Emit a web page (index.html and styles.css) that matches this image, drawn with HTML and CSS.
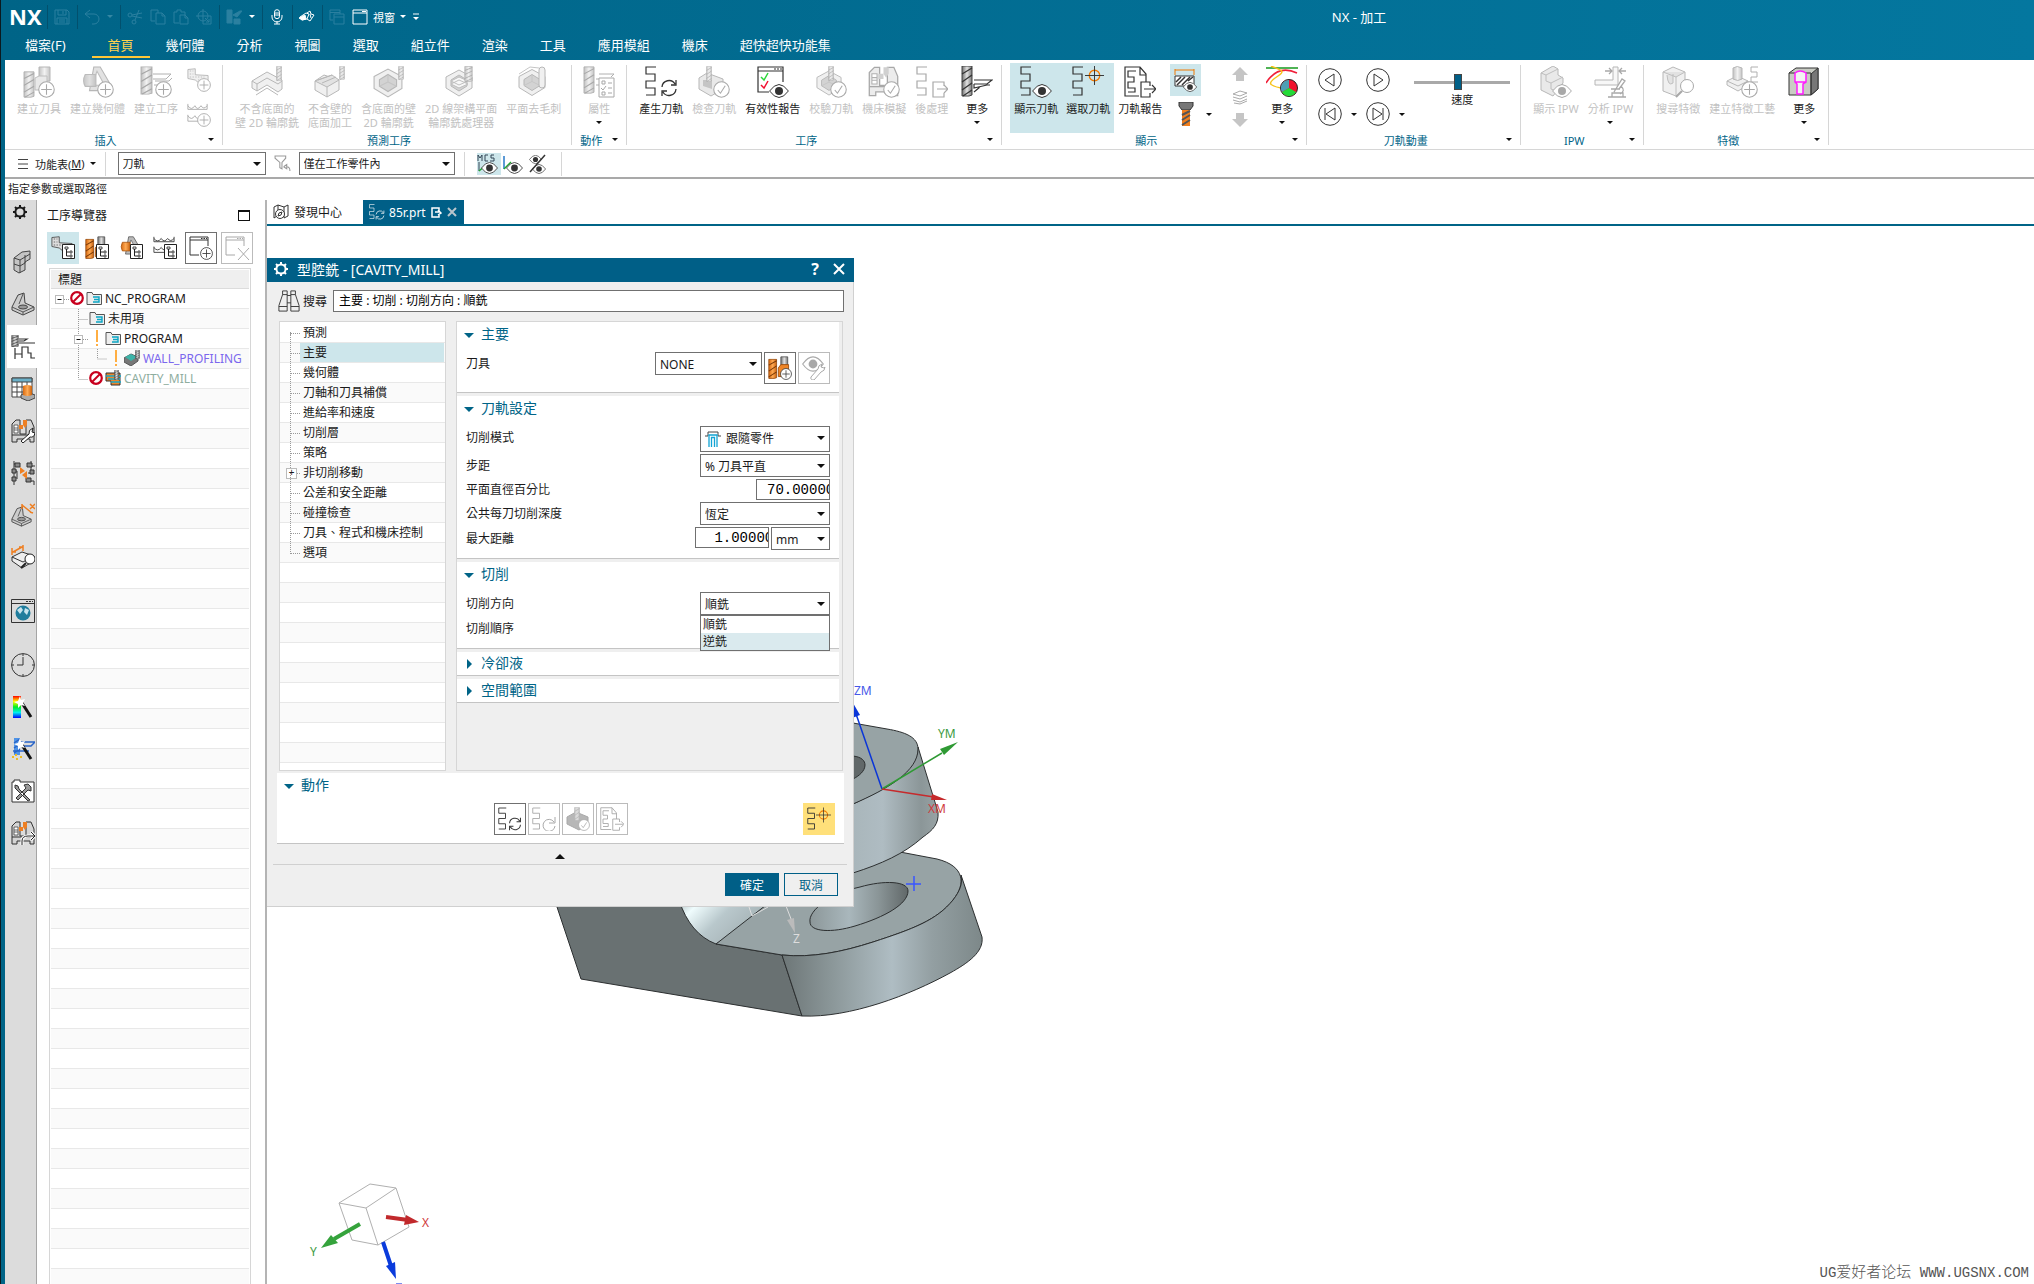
FILE: index.html
```
<!DOCTYPE html>
<html lang="zh-Hant">
<head>
  <meta charset="UTF-8">
  <meta name="viewport" content="width=device-width, initial-scale=1.0">
  <title>NX - 加工</title>
  <link rel="stylesheet" href="styles.css">
</head>
<body>
  <!-- shared icon parts -->
  <svg class="defs" width="0" height="0" aria-hidden="true">
    <defs>
      <linearGradient id="gMetal" x1="0" x2="1"><stop offset="0" stop-color="#6f6f6f"/><stop offset=".5" stop-color="#e2e2e2"/><stop offset="1" stop-color="#777"/></linearGradient>
      <linearGradient id="gOrange" x1="0" x2="1"><stop offset="0" stop-color="#d96a10"/><stop offset=".5" stop-color="#ffab55"/><stop offset="1" stop-color="#c8600c"/></linearGradient>
      <linearGradient id="gRainbow" x1="0" x2="0" y1="0" y2="1"><stop offset="0" stop-color="#f00"/><stop offset=".25" stop-color="#ff0"/><stop offset=".5" stop-color="#0e2"/><stop offset=".75" stop-color="#0ee"/><stop offset="1" stop-color="#00f"/></linearGradient>
      <symbol id="zig" viewBox="0 0 12 30"><path d="M11 1H1v7h9v7H1v7h9v7H1" fill="none" stroke="currentColor" stroke-width="1.2"/></symbol>
      <symbol id="plus" viewBox="0 0 16 16"><circle cx="8" cy="8" r="7.3" fill="#fff" stroke="#333"/><path d="M8 3v10M3 8h10" stroke="#333"/></symbol>
      <symbol id="check" viewBox="0 0 16 16"><circle cx="8" cy="8" r="7.3" fill="#fff" stroke="#333"/><path d="M4.500 8.500l2.500 3 4.500-7" fill="none" stroke="#333"/></symbol>
      <symbol id="eye" viewBox="0 0 20 14"><path d="M.6 7Q10-6 19.400 7Q10 20 .6 7z" fill="#fff" stroke="#333"/><circle cx="10" cy="7" r="4" fill="#333"/></symbol>
      <symbol id="tool" viewBox="0 0 12 32" preserveAspectRatio="none"><path d="M1 1h10v29l-3 1H1z" fill="url(#gMetal)" stroke="#444"/><path d="M1 9l10-6M1 17l10-7M1 25l10-7M2 31l9-6" stroke="#333" stroke-width="1.300"/></symbol>
      <symbol id="otool" viewBox="0 0 12 28" preserveAspectRatio="none"><path d="M1 1h10v25l-3 1H1z" fill="url(#gOrange)" stroke="#8c4208"/><path d="M1 9l10-6M1 17l10-7M1 25l10-7" stroke="#7a3a08" stroke-width="1.300"/></symbol>
      <symbol id="refresh" viewBox="0 0 18 18"><path d="M2 8a7 7 0 0 1 13-3M16 1v5h-5M16 10a7 7 0 0 1-13 3M2 17v-5h5" fill="none" stroke="currentColor" stroke-width="1.300"/></symbol>
      <symbol id="hexpart" viewBox="0 0 28 28"><path d="M1 8L14 1l13 7v11L14 27 1 19z" fill="#ddd" stroke="#555"/><path d="M6 11l8-5 8 5v6l-8 5-8-5z" fill="#999" stroke="#555"/><path d="M6 17l8-4 8 4M14 6v7" fill="none" stroke="#777"/></symbol>
      <symbol id="treebadge" viewBox="0 0 14 16"><path d="M.5.5h12v14H.5z" fill="#fff" stroke="#222"/><path d="M4.500 4v8M4.500 8h3M4.500 12h3" stroke="#222" fill="none"/><path d="M3 3h3v2H3zM8 7h2v2H8zM8 11h2v2H8z" fill="#fff" stroke="#222" stroke-width=".8"/></symbol>
      <symbol id="wave" viewBox="0 0 24 22" preserveAspectRatio="none"><path d="M1 1v6h22V1M1 3q4 6 8 0 3 6 7 0 3 5 7 0M1 13v7h22v-7M1 14q4 6 8 0 3 6 7 0 3 5 7 0" fill="none" stroke="#333"/></symbol>
      <symbol id="flag" viewBox="0 0 24 24" preserveAspectRatio="none"><path d="M1 2l8-1v8l14 1v11h-9l-5-5-8-2z" fill="#ddd" stroke="#444"/><path d="M3 4h4M3 8h4M3 12h16M12 16h9" stroke="#555" stroke-dasharray="1.500 1.500"/></symbol>
      <symbol id="machine" viewBox="0 0 24 24"><path d="M1 20V5l4-4h4v14h6V1h5l3 7v15h-4v-3H6v3H1z" fill="#d4d4d4" stroke="#333"/><path d="M3 6h4v8H3zM3 9h4M3 11h4" fill="#fff" stroke="#444" stroke-width=".8"/><path d="M12 1h4v5l-2 3-2-3zM8 6h4v4H8z" fill="#ee7f22"/><path d="M1 16h22" stroke="#333"/></symbol>
      <symbol id="target" viewBox="0 0 20 20"><circle cx="10" cy="10" r="5.500" fill="none" stroke="#f07800" stroke-width="1.400"/><path d="M10 0v20M0 10h20" stroke="#333"/></symbol>
      <symbol id="report" viewBox="0 0 32 32"><path d="M15 30H1V1h15l6 7v8M16 1v8h6M12 5H4v6h6v5H4v6h7v4H4" fill="none" stroke="currentColor" stroke-width="1.200"/><path d="M26 20v-4h-9v15h9v-4M20 23h11M28 19l4 4-4 4" fill="none" stroke="currentColor" stroke-width="1.200"/></symbol>
      <symbol id="folder" viewBox="0 0 16 16"><path d="M1 14.500V2.500h5l1 2h8.500v10z" fill="#eee" stroke="#555"/><path d="M7 7h6v5H7M8 9.500h5" fill="none" stroke="#0aa5c4" stroke-width="1.400"/></symbol>
      <symbol id="ban" viewBox="0 0 14 14"><circle cx="7" cy="7" r="5.800" fill="#fff" stroke="#c8001e" stroke-width="2.200"/><path d="M3 11l8-8" stroke="#c8001e" stroke-width="2"/></symbol>
      <symbol id="gear" viewBox="0 0 16 16"><circle cx="8" cy="8" r="4.600" fill="none" stroke="currentColor" stroke-width="2"/><path d="M8 1v2M8 13v2M1 8h2M13 8h2M3 3l1.500 1.500M11.500 11.500L13 13M13 3l-1.500 1.500M3 13l1.500-1.500" stroke="currentColor" stroke-width="2"/></symbol>
      <symbol id="bracket" viewBox="0 0 24 24"><path d="M1 15L7 3l6-2 1 10 9 4v3l-11 5L1 18z" fill="#ccc" stroke="#444"/><path d="M1 15l11 5 11-5M12 20v3M8 12L12 2" fill="none" stroke="#555"/><ellipse cx="12" cy="15" rx="4.500" ry="2" fill="#999" stroke="#444"/></symbol>
      <symbol id="hopper" viewBox="0 0 28 28"><path d="M11 1h6l10 17v5H7z" fill="#bbb" stroke="#555"/><path d="M14 5l7 13H9z" fill="#fff" stroke="#666"/><path d="M3 8h10v11H3q-3-5 0-11z" fill="url(#gOrange)" stroke="#a65410"/></symbol>
      <symbol id="holder" viewBox="0 0 28 28"><use href="#otool" x="0" y="3" width="11" height="24"/><path d="M15 1h8v12h-8z" fill="url(#gMetal)" stroke="#555"/><path d="M12 14l3-4h9v14H12z" fill="#ee8528" stroke="#9a4c0c"/></symbol>
      <symbol id="wand" viewBox="0 0 24 24"><path d="M11 8l9 14" stroke="#111" stroke-width="3"/><path d="M9 1l1 4 4-1-2 4 2 3-4-1-3 3V9L3 7l4-1z" fill="#fff"/></symbol>
    </defs>
  </svg>

  <div class="app">
    <header class="titlebar">
      <div class="quick">
        <strong class="logo">NX</strong>
        <i class="vline"></i>
        <button class="q dim" aria-label="儲存"><svg viewBox="0 0 16 16"><path d="M1 1h12l2 2v12H1zM4 1v5h8V1M9 2v3M3 15V9h10v6M5 11h6M5 13h6"/></svg></button>
        <i class="vline"></i>
        <button class="q dim" aria-label="復原"><svg viewBox="0 0 16 16"><path d="M6 1L1 5l5 4M1 5h9a5 5 0 0 1 0 10H8"/></svg></button>
        <b class="caret dim"></b>
        <i class="vline"></i>
        <button class="q dim" aria-label="剪下"><svg viewBox="0 0 16 16"><circle cx="3" cy="6" r="2"/><circle cx="7" cy="13" r="2"/><path d="M5 7l10 2M8 11l4-10M5 6l10-2"/></svg></button>
        <button class="q dim" aria-label="複製"><svg viewBox="0 0 16 16"><path d="M5 12H1V1h7v3M6 4h6l3 3v8H6zM12 4v3h3"/></svg></button>
        <button class="q dim" aria-label="貼上"><svg viewBox="0 0 16 16"><path d="M6 14H1V3h3V1h4v2h4v3M7 6h5l3 3v6H7zM12 6v3h3"/></svg></button>
        <button class="q dim" aria-label="重複"><svg viewBox="0 0 16 16"><circle cx="7" cy="7" r="5"/><path d="M7 0v7M0 7h7M7 7h8v8H7zM9 9l4 4M13 10v3h-3"/></svg></button>
        <i class="vline"></i>
        <button class="q dim" aria-label="顯示"><svg viewBox="0 0 16 16"><path fill="currentColor" d="M1 1h5v13H1zM7 6l7-4h2l-5 6zM8 10h6v5H8z"/></svg></button>
        <b class="caret"></b>
        <i class="vline"></i>
        <button class="q" aria-label="語音"><svg viewBox="0 0 16 16"><rect x="5.500" y=".7" width="5" height="9" rx="2.500"/><path d="M3 6v2a5 5 0 0 0 10 0V6M8 12v3M5 15h6M6 4h4M6 6h4"/></svg></button>
        <i class="vline"></i>
        <button class="q" aria-label="觸控"><svg viewBox="0 0 16 16"><path d="M1 8l6-4 3 1-2 5-5 1zM8 4l3-2 1 3 3 1-4 6-3-2M11 5l1 4"/><path d="M0 9l6-3 1 4-4 1z" fill="currentColor"/></svg></button>
        <i class="vline"></i>
        <button class="q dim" aria-label="切換視窗"><svg viewBox="0 0 16 16"><path d="M4 11H1V1h10v4M1 3.500h10M5 5h10v10H5zM5 8h10"/></svg></button>
        <button class="window-menu"><svg viewBox="0 0 16 16"><path d="M1 1h14v14H1zM1 4h14M10 2.500h4"/></svg>視窗<b class="caret"></b></button>
        <button class="q more-cmd" aria-label="自訂"><svg viewBox="0 0 16 16"><path d="M5 5h6"/><path d="M5 8h6l-3 3z" fill="currentColor" stroke="none"/></svg></button>
      </div>
      <div class="caption">NX - 加工</div>
    </header>

    <nav class="tabs">
      <a class="file" href="#">檔案(F)</a>
      <a class="on" href="#">首頁</a>
      <a href="#">幾何體</a>
      <a href="#">分析</a>
      <a href="#">視圖</a>
      <a href="#">選取</a>
      <a href="#">組立件</a>
      <a href="#">渲染</a>
      <a href="#">工具</a>
      <a href="#">應用模組</a>
      <a href="#">機床</a>
      <a href="#">超快超快功能集</a>
    </nav>

    <div class="frame">
      <!-- ribbon -->
      <div class="ribbon">
        <section class="group g-insert">
          <div class="cmds">
            <button class="cmd" disabled><svg viewBox="0 0 32 32"><use href="#tool" x="0" y="5" width="12" height="27"/><path d="M16 1h11v14H16z" fill="url(#gMetal)" stroke="#555"/><path d="M12 12l4-2h8v14H12z" fill="#ccc" stroke="#666"/><use href="#plus" x="15" y="15" width="17" height="17"/></svg>建立刀具</button>
            <button class="cmd" disabled><svg viewBox="0 0 32 32"><use href="#hopper" x="0" y="0" width="30" height="30"/><use href="#plus" x="15" y="15" width="17" height="17"/></svg>建立幾何體</button>
            <button class="cmd" disabled><svg viewBox="0 0 32 32"><use href="#tool" x="0" y="0" width="13" height="29"/><path d="M13 8h18l-5 5H13M14 19h15M15 15h14l3-3" fill="none" stroke="#444"/><use href="#plus" x="15" y="15" width="17" height="17"/></svg>建立工序</button>
            <div class="stack">
              <button class="mini" disabled aria-label="建立程式"><svg viewBox="0 0 24 24"><use href="#flag" width="22" height="18"/><use href="#plus" x="10" y="10" width="14" height="14"/></svg></button>
              <button class="mini" disabled aria-label="建立方法"><svg viewBox="0 0 24 24"><use href="#wave" width="21" height="20"/><use href="#plus" x="10" y="10" width="14" height="14"/></svg></button>
            </div>
          </div>
          <div class="foot"><span>插入</span><b class="caret"></b></div>
        </section>
        <i class="bar"></i>
        <section class="group g-predict">
          <div class="cmds">
            <button class="cmd" disabled><svg viewBox="0 0 32 32"><path d="M1 15l15-9 15 8v9l-4 3-11-7-10 6-5-3z" fill="#ddd" stroke="#555"/><path d="M1 15l5 3 10-6 11 6 4-3M6 18v7M5 29l11-7 11 7" fill="none" stroke="#555"/><use href="#tool" x="25" y="0" width="6" height="15"/></svg>不含底面的<br>壁 2D 輪廓銑</button>
            <button class="cmd" disabled><svg viewBox="0 0 32 32"><path d="M1 15l9-6 15 5v10l-12 7-12-7z" fill="#ddd" stroke="#555"/><path d="M1 15l17-6 7 5-12 7zM4 14l14-5M8 17l14-6M13 21v10" fill="#bbb" stroke="#555"/><use href="#tool" x="25" y="0" width="6" height="14"/></svg>不含壁的<br>底面加工</button>
            <button class="cmd" disabled><svg viewBox="0 0 32 32"><use href="#hexpart" x="0" y="2" width="30" height="30"/><use href="#tool" x="25" y="0" width="6" height="14"/></svg>含底面的壁<br>2D 輪廓銑</button>
            <button class="cmd" disabled><svg viewBox="0 0 32 32"><use href="#hexpart" x="0" y="3" width="28" height="28"/><path d="M6 15l8-4 9 4-9 4zM6 18l8-4 9 4-9 4z" fill="#eee" stroke="#666"/><use href="#tool" x="19" y="0" width="9" height="16"/></svg>2D 線架構平面<br>輪廓銑處理器</button>
            <button class="cmd" disabled><svg viewBox="0 0 32 32"><use href="#hexpart" x="0" y="2" width="28" height="29"/><path d="M1 8L12 1l9 1" fill="none" stroke="#777"/><rect x="21" y="1" width="6" height="21" rx="3" fill="#ddd" stroke="#555"/></svg>平面去毛刺</button>
          </div>
          <div class="foot"><span>預測工序</span><b class="caret none"></b></div>
        </section>
        <i class="bar"></i>
        <section class="group g-action">
          <div class="cmds">
            <button class="cmd" disabled><svg viewBox="0 0 32 32"><use href="#tool" x="0" y="0" width="12" height="28"/><path d="M16 8h15l-3 3M13 13h3M13 19h3" stroke="#444" fill="none"/><path d="M16 12h15v19H16z" fill="#fff" stroke="#333"/><path d="M19 15h3v3h-3zM19 26h3v3h-3zM18 22l2 2 3-4M25 17h4M25 22h4M25 27h4" fill="none" stroke="#333"/></svg>屬性<b class="caret"></b></button>
          </div>
          <div class="foot"><span>動作</span><b class="caret"></b></div>
        </section>
        <i class="bar"></i>
        <section class="group g-oper">
          <div class="cmds">
            <button class="cmd"><svg viewBox="0 0 32 32"><use href="#zig" width="12" height="30"/><use href="#refresh" x="15" y="13" width="18" height="18"/></svg>產生刀軌</button>
            <button class="cmd" disabled><svg viewBox="0 0 32 32"><path d="M1 12l8-5 16 6v10l-12 7-12-7z" fill="#ccc" stroke="#555"/><path d="M5 14h9v9l-9-3z" fill="#777"/><use href="#tool" x="8" y="0" width="6" height="16"/><use href="#check" x="15" y="15" width="17" height="17"/></svg>檢查刀軌</button>
            <button class="cmd"><svg viewBox="0 0 32 32"><path d="M12 26H1V1h25v15M1 5h25" fill="none" stroke="#333" stroke-width="1.200"/><path d="M17 3h2M20 3h2M23 3h2" stroke="#333" stroke-width="1.200"/><path d="M4 11l3 3 4-7" fill="none" stroke="#2bd53a" stroke-width="1.500"/><path d="M4 19l3 3 4-7" fill="none" stroke="#f0102e" stroke-width="1.500"/><use href="#eye" x="12" y="18" width="20" height="14"/></svg>有效性報告</button>
            <button class="cmd" disabled><svg viewBox="0 0 32 32"><use href="#hexpart" x="0" y="4" width="28" height="26"/><use href="#tool" x="13" y="0" width="6" height="15"/><use href="#check" x="15" y="15" width="17" height="17"/></svg>校驗刀軌</button>
            <button class="cmd" disabled><svg viewBox="0 0 32 32"><use href="#machine" width="31" height="31"/><use href="#check" x="15" y="15" width="17" height="17"/></svg>機床模擬</button>
            <button class="cmd" disabled><svg viewBox="0 0 32 32"><use href="#zig" width="12" height="30"/><path d="M28 20v-4H17v15h11v-4M21 23h11M28 19l4 4-4 4" fill="none" stroke="#333" stroke-width="1.200"/></svg>後處理</button>
            <button class="cmd more"><svg viewBox="0 0 32 32"><use href="#tool" x="0" y="-1" width="12" height="32"/><path d="M13 14h18l-5 4H13M13 18v4l13-3h3M13 26l6-5" fill="none" stroke="#333" stroke-width="1.200"/></svg>更多<b class="caret"></b></button>
          </div>
          <div class="foot"><span>工序</span><b class="caret"></b></div>
        </section>
        <i class="bar"></i>
        <section class="group g-show">
          <div class="cmds">
            <button class="cmd lit"><svg viewBox="0 0 32 32"><use href="#zig" width="12" height="30"/><use href="#eye" x="12" y="18" width="20" height="14"/></svg>顯示刀軌</button>
            <button class="cmd lit"><svg viewBox="0 0 32 32"><use href="#zig" width="12" height="30"/><use href="#target" x="13" y="0" width="19" height="19"/></svg>選取刀軌</button>
            <button class="cmd"><svg viewBox="0 0 32 32"><use href="#report" width="32" height="32"/></svg>刀軌報告</button>
            <div class="stack ipw">
              <button class="mini lit" aria-label="毛坯顯示"><svg viewBox="0 0 24 24"><path d="M1 1v6M20 1v6M1 2h19" stroke="#f07800" fill="none"/><path d="M1 8h19v10H1z" fill="#fff" stroke="#333"/><path d="M2 14l5-5M3 17l8-8M8 17l8-8M14 13l5-4" stroke="#333" stroke-width="1.500"/><use href="#eye" x="8" y="14" width="16" height="10"/></svg></button>
              <button class="mini bolt" aria-label="刀具顯示"><svg viewBox="0 0 24 24"><path d="M5 0h14v4l-3 4H8L5 4z" fill="#777" stroke="#333"/><path d="M8 8h8v16H8z" fill="#f07e1c"/><path d="M8 13l8-4M8 18l8-5M8 23l8-5" stroke="#555" stroke-width="2"/></svg><b class="caret"></b></button>
            </div>
            <div class="stack arrows">
              <button class="tiny" disabled aria-label="上移"><svg viewBox="0 0 16 16"><path d="M8 1l8 8h-4v6H4V9H0z" fill="#777"/></svg></button>
              <button class="tiny" disabled aria-label="層"><svg viewBox="0 0 16 16"><path d="M1 5l7-3 7 2-7 3zM1 8l7 2 7-3M1 11l7 2 7-3M2 14l6 1 7-3" fill="none" stroke="#333"/></svg></button>
              <button class="tiny" disabled aria-label="下移"><svg viewBox="0 0 16 16"><path d="M8 15l8-8h-4V1H4v6H0z" fill="#777"/></svg></button>
            </div>
            <button class="cmd more"><svg viewBox="0 0 32 32"><path d="M0 2h32" stroke="#159a1d" stroke-width="1.500"/><path d="M0 17Q12-2 31 7" fill="none" stroke="#f0203a" stroke-width="1.500"/><path d="M5 0c8 4 16 4 7 10s-12 9 3 12" fill="none" stroke="#f7c31a" stroke-width="1.500"/><circle cx="23" cy="22" r="8.500" fill="#f0122e" stroke="#222"/><path d="M23 22V14a8 8 0 0 0-7 12z" fill="#4c9fb5"/><path d="M23 22l-7 4a8 8 0 0 0 14 0z" fill="#22da38"/></svg>更多<b class="caret"></b></button>
          </div>
          <div class="foot"><span>顯示</span><b class="caret"></b></div>
        </section>
        <i class="bar"></i>
        <section class="group g-anim">
          <div class="cmds">
            <div class="player">
              <button class="pl" aria-label="倒轉"><svg viewBox="0 0 24 24"><circle cx="12" cy="12" r="11.300"/><path d="M16 6v12l-9-6z"/></svg></button><span></span>
              <button class="pl" aria-label="播放"><svg viewBox="0 0 24 24"><circle cx="12" cy="12" r="11.300"/><path d="M8 6v12l9-6z"/></svg></button><span></span>
              <button class="pl" aria-label="上一步"><svg viewBox="0 0 24 24"><circle cx="12" cy="12" r="11.300"/><path d="M17 6v12l-9-6zM7 6v12"/></svg></button><b class="caret"></b>
              <button class="pl" aria-label="下一步"><svg viewBox="0 0 24 24"><circle cx="12" cy="12" r="11.300"/><path d="M7 6v12l9-6zM17 6v12"/></svg></button><b class="caret"></b>
            </div>
            <div class="speed">
              <input type="range" id="speed" min="0" max="100" value="45">
              <label for="speed">速度</label>
            </div>
          </div>
          <div class="foot"><span>刀軌動畫</span><b class="caret"></b></div>
        </section>
        <i class="bar"></i>
        <section class="group g-ipw">
          <div class="cmds">
            <button class="cmd" disabled><svg viewBox="0 0 32 32"><path d="M1 7l12-7 5 3v6l5 3v5l-10 13-12-6z" fill="#ccc" stroke="#555"/><path d="M1 7l5 2 12-6M6 9v6l5 2 12-6M11 17v6l5 2" fill="none" stroke="#666"/><use href="#eye" x="12" y="18" width="20" height="14"/></svg>顯示 IPW</button>
            <button class="cmd" disabled><svg viewBox="0 0 32 32"><path d="M19 1h5v18H1v-5h18z" fill="#eee" stroke="#555"/><path d="M11 5h7M15 2l3 3-3 3M32 5h-7M28 2l-3 3 3 3M14 31h18M18 27h11v4H18zM20 26l8-13 3 2-6 8M17 23h9M27 20q5 5-1 8" fill="none" stroke="#333" stroke-width="1.300"/></svg>分析 IPW<b class="caret"></b></button>
          </div>
          <div class="foot"><span>IPW</span><b class="caret"></b></div>
        </section>
        <i class="bar"></i>
        <section class="group g-feat">
          <div class="cmds">
            <button class="cmd" disabled><svg viewBox="0 0 32 32"><path d="M1 6l10-5 12 5v17l-9 7-13-5z" fill="#ddd" stroke="#555"/><path d="M1 6l13 5 9-5M14 11v19M5 9q1 12 6 8V8" fill="#bbb" stroke="#666"/><circle cx="25" cy="20" r="6.500" fill="#fff" stroke="#333"/><path d="M20 25l-6 6" stroke="#333" stroke-width="2"/></svg>搜尋特徵</button>
            <button class="cmd" disabled><svg viewBox="0 0 32 32"><path d="M1 15l10-5 11 5v4l-10 6-11-6z" fill="#ddd" stroke="#555"/><path d="M1 15l11 5 10-5" fill="none" stroke="#555"/><path d="M7 2q4-3 9 0v11q-4 3-9 0z" fill="url(#gMetal)" stroke="#555"/><path d="M32 1h-7v5h6v5h-6v5h7" fill="none" stroke="#444"/><use href="#plus" x="15" y="15" width="17" height="17"/></svg>建立特徵工藝</button>
            <button class="cmd more"><svg viewBox="0 0 32 32"><path d="M1 7l7-5h22v21l-7 6H1z" fill="#c9ccc4" stroke="#333"/><path d="M23 8l7-6v21l-7 6z" fill="#777" stroke="#333"/><path d="M1 7h22v22" fill="none" stroke="#333"/><path d="M7 7q5-4 11 0v9l-3 2v10H9V18l-2-2zM7 16h11" fill="#f3f3f3" stroke="#ff1cff" stroke-width="1.500"/></svg>更多<b class="caret"></b></button>
          </div>
          <div class="foot"><span>特徵</span><b class="caret"></b></div>
        </section>
        <i class="bar"></i>
      </div>

      <!-- selection bar -->
      <div class="selbar">
        <button class="menu-btn"><svg viewBox="0 0 12 12"><path d="M1 1.500h10M1 6h10M1 10.500h10" stroke="#444"/></svg>功能表(<u>M</u>)<b class="caret"></b></button>
        <i class="bar"></i>
        <span class="combo type"><select aria-label="類型"><option>刀軌</option></select></span>
        <svg class="funnel" viewBox="0 0 16 16"><path d="M1 1h10v2L7.500 7v6l-2-1V7L1 3zM9 11l3-2v2q3 0 3 4M9 11l3 2v-2" fill="none" stroke="#999"/></svg>
        <span class="combo scope"><select aria-label="範圍"><option>僅在工作零件內</option></select></span>
        <i class="bar"></i>
        <button class="sel lit" aria-label="MCS 顯示"><svg viewBox="0 0 22 20"><path d="M1 1v6M1 1l2 3 2-3v6M11 1H8v6h3M17 1h-3v3h3v3h-4M2 8v9" fill="none" stroke="#345"/><path d="M2 17l7-6" stroke="#1ea82f" stroke-width="1.500"/><use href="#eye" x="4" y="8" width="17" height="12"/></svg></button>
        <button class="sel" aria-label="座標顯示"><svg viewBox="0 0 22 20"><path d="M2 2v13" stroke="#2678c8" stroke-width="1.500"/><path d="M2 15l7-7" stroke="#1ea82f" stroke-width="1.500"/><use href="#eye" x="4" y="8" width="17" height="12"/></svg></button>
        <button class="sel" aria-label="隱藏"><svg viewBox="0 0 22 20"><use href="#eye" x="2" y="1" width="13" height="9"/><use href="#eye" x="5" y="10" width="14" height="10"/><path d="M3 18L18 1" stroke="#333" stroke-width="1.500"/></svg></button>
        <i class="bar"></i>
      </div>
      <div class="prompt">指定參數或選取路徑</div>

      <div class="work">
        <!-- resource bar -->
        <aside class="rail">
          <button class="gear" aria-label="設定"><svg viewBox="0 0 16 16"><use href="#gear" width="16" height="16"/></svg></button>
          <button aria-label="組立件導覽器"><svg viewBox="0 0 24 24"><path d="M3 8l8-6 8-1v8l-5 3v8l-6 3-5-3z" fill="#c4c4c4" stroke="#444"/><path d="M3 8l6 2 10-6M9 10v13M3 14l6 2 5-3M14 5v8" fill="none" stroke="#444"/></svg></button>
          <button aria-label="零件導覽器"><svg viewBox="0 0 24 24"><use href="#bracket" width="24" height="24"/></svg></button>
          <button class="on" aria-label="工序導覽器"><svg viewBox="0 0 24 24"><use href="#tool" x="0" y="0" width="8" height="12"/><path d="M8 4h8l-3 2H8M8 8h16M4 13v11M4 19h7v-7h6v6h3v5h4M11 23v-4" fill="none" stroke="#333" stroke-width="1.200"/></svg></button>
          <button aria-label="加工特徵"><svg viewBox="0 0 24 24"><path d="M1 1h20v19H1z" fill="#fff" stroke="#444"/><path d="M1 1h20v4H1z" fill="#6bb0c8" stroke="#444"/><path d="M1 10h20M1 15h20M6 5v15M11 5v15M16 5v15" stroke="#444"/><path d="M10 18l6-3 8 3v3l-7 3-7-3z" fill="#aaa" stroke="#444"/><path d="M12 9q4-2 9 0v9q-4 2-9 0z" fill="url(#gOrange)"/></svg></button>
          <button aria-label="機床導覽器"><svg viewBox="0 0 24 24"><use href="#machine" width="24" height="24"/><path d="M10 22l8-7q-1-4 4-6l-1 4 3 1q-1 5-5 4l-7 6z" fill="#fff" stroke="#222"/></svg></button>
          <button aria-label="運動"><svg viewBox="0 0 24 24"><path d="M3 0v3h5M3 3v21M3 10h3v8M20 0v12h-3M20 5h4M17 20h6v4" fill="none" stroke="#333"/><path d="M4 2h5v4H4zM1 8h4v4H1zM1 16h4v4H1zM16 2h5v4h-5zM19 9h4v4h-4zM15 17h5v4h-5z" fill="#888" stroke="#333"/><path d="M9 6l5 4-5 3zM16 10v8l-5-4z" fill="#ee7f22"/></svg></button>
          <button aria-label="PMI"><svg viewBox="0 0 24 24"><use href="#bracket" x="0" y="3" width="21" height="21"/><path d="M11 2l10 8M19 1l5 5M24 1l-5 5M11 1v5M19 9l3 1" stroke="#ee7f22" stroke-width="1.500"/></svg></button>
          <button aria-label="檢查"><svg viewBox="0 0 24 24"><path d="M1 12l10-5 12 4v5l-12 7-10-7z" fill="#eee" stroke="#333"/><path d="M1 12l11 5 11-6" fill="none" stroke="#333"/><path d="M1 3v7M2 7l9-5M12 0v6M1 7h4M12 2H8" stroke="#ee7f22" stroke-width="1.500"/><circle cx="19" cy="14" r="5" fill="#fff" stroke="#222"/><path d="M15 18l-5 5" stroke="#222" stroke-width="2"/></svg></button>
          <button class="far" aria-label="瀏覽器"><svg viewBox="0 0 24 24"><path d="M.5.5h23v23H.5zM.5 4.500h23" fill="none" stroke="#333"/><path d="M15 2.500h2M18 2.500h2M21 2.500h1" stroke="#333"/><circle cx="12" cy="14" r="7.500" fill="#207d9d"/><path d="M6 11l4-3 2 3-3 4zM14 9l4 2-2 5-3-3z" fill="#c7e4ee"/></svg></button>
          <button class="far" aria-label="歷程"><svg viewBox="0 0 24 24"><circle cx="12" cy="12" r="11.400" fill="none" stroke="#333"/><path d="M12 4v8H6M12 1v2M12 21v2M1 12h2M21 12h2" fill="none" stroke="#333"/></svg></button>
          <button aria-label="視覺化"><svg viewBox="0 0 24 24"><path d="M2 1h8v22H2z" fill="url(#gRainbow)"/><use href="#wand" width="24" height="24"/></svg></button>
          <button aria-label="加工精靈"><svg viewBox="0 0 24 24"><path d="M3 1h6v17H3z" fill="#4f93e6"/><path d="M3 6l6-4M3 11l6-4M3 16l6-4M9 5h15l-4 4H10M2 14h16" fill="none" stroke="#2864c8" stroke-width="1.500"/><path d="M1 20h2M5 22h2M9 20h2M4 18h2" stroke="#eebb22" stroke-width="2"/><use href="#wand" width="24" height="24"/></svg></button>
          <button aria-label="工具"><svg viewBox="0 0 24 24"><path d="M1 23V3h2V1h6v2h14v20z" fill="#fff" stroke="#333"/><path d="M4 6l3 1 1 3 11 11-2 1L6 11 4 9zM20 8l-3-3-4 1 2 3L5 19l2 2L17 11l3 1z" fill="#999" stroke="#333"/></svg></button>
          <button aria-label="後處理"><svg viewBox="0 0 24 24"><use href="#machine" width="24" height="24"/><path d="M11 24v-4q0-5 6-5h6M20 11l4 4-4 4" fill="none" stroke="#fff" stroke-width="3"/><path d="M11 24v-4q0-5 6-5h6M20 11l4 4-4 4" fill="none" stroke="#222"/></svg></button>
        </aside>

        <!-- operation navigator -->
        <section class="navigator">
          <div class="nav-head"><h2>工序導覽器</h2><button class="max" aria-label="最大化"></button></div>
          <div class="nav-tools">
            <button class="lit" aria-label="程式順序視圖"><svg viewBox="0 0 24 24"><use href="#flag" width="22" height="18"/><use href="#treebadge" x="11" y="8" width="14" height="16"/></svg></button>
            <button aria-label="機床視圖"><svg viewBox="0 0 24 24"><use href="#holder" width="24" height="24"/><use href="#treebadge" x="11" y="8" width="14" height="16"/></svg></button>
            <button aria-label="幾何視圖"><svg viewBox="0 0 24 24"><use href="#hopper" width="24" height="22"/><use href="#treebadge" x="11" y="8" width="14" height="16"/></svg></button>
            <button aria-label="加工方法視圖"><svg viewBox="0 0 24 24"><use href="#wave" width="22" height="18"/><use href="#treebadge" x="11" y="8" width="14" height="16"/></svg></button>
            <button class="boxed" aria-label="新增"><svg viewBox="0 0 24 24"><path d="M10 19H1V1h18v9M1 4h18" fill="none" stroke="#333"/><path d="M12 2.500h6" stroke="#333" stroke-dasharray="1.500 1"/><use href="#plus" x="11" y="11" width="13" height="13"/></svg></button>
            <button class="boxed" disabled aria-label="移除"><svg viewBox="0 0 24 24"><path d="M10 19H1V1h18v9M1 4h18M13 12l11 12M24 12L13 24" fill="none" stroke="#333"/><path d="M12 2.500h6" stroke="#333" stroke-dasharray="1.500 1"/></svg></button>
          </div>
          <div class="tree">
            <div class="tree-head">標題</div>
            <ul>
              <li class="l0"><svg class="s14" viewBox="0 0 14 14"><use href="#ban" width="14" height="14"/></svg><svg class="s16" viewBox="0 0 16 16"><use href="#folder" width="16" height="16"/></svg>NC_PROGRAM</li>
              <li class="l1"><svg class="s16" viewBox="0 0 16 16"><use href="#folder" width="16" height="16"/></svg>未用項</li>
              <li class="l2"><i class="bang"></i><svg class="s16" viewBox="0 0 16 16"><use href="#folder" width="16" height="16"/></svg>PROGRAM</li>
              <li class="l3 violet"><i class="bang"></i><svg class="s16" viewBox="0 0 16 16"><path d="M0 8l7-4 7 3v4l-7 5-7-4z" fill="#777" stroke="#555"/><path d="M1 7l6-3 6 3-6 4z" fill="#3cb4a8"/><use href="#tool" x="11" y="0" width="5" height="9"/></svg>WALL_PROFILING</li>
              <li class="l1 sage"><svg class="s14" viewBox="0 0 14 14"><use href="#ban" width="14" height="14"/></svg><svg class="s16" viewBox="0 0 16 16"><path d="M1 3h14v12H6v-4H1z" fill="#eb862c" stroke="#333"/><path d="M1 6h15M3 9h12M6 12h10" stroke="#19a9c9" stroke-width="1.500"/><use href="#tool" x="9" y="0" width="5" height="10"/></svg>CAVITY_MILL</li>
            </ul>
            <svg class="lines" width="60" height="100" viewBox="0 0 60 100">
              <path d="M14 10.500h6M28.500 20v70M28.500 30.500h9M33 50.500h5M47.500 60v10h9M28.500 90.500h9"/>
              <g class="boxes"><rect x="5.500" y="6.500" width="8" height="8"/><path d="M7.500 10.500h4"/><rect x="24.500" y="46.500" width="8" height="8"/><path d="M26.500 50.500h4"/></g>
            </svg>
          </div>
        </section>

        <!-- graphics window -->
        <main class="view">
          <div class="docs">
            <a class="doc" href="#"><svg viewBox="0 0 16 16"><path d="M1 3l4-2v5M1 3v11l3-2M5 1l3 1M11 3l4-2v11l-4 2V3L8 2" fill="none" stroke="#333"/><circle cx="7" cy="10" r="4.500" fill="#fff" stroke="#333"/><path d="M5 12l1-3 3-1-1 3z" fill="none" stroke="#333"/></svg>發現中心</a>
            <a class="doc on" href="#"><svg viewBox="0 0 16 16"><use href="#zig" width="6" height="15"/><use href="#refresh" x="6" y="6" width="10" height="10"/></svg>85r.prt<svg class="s12" viewBox="0 0 12 12"><path d="M9 5V2H2v9h7V9M5 6h5M8 4l3 3-3 2" fill="none" stroke="#fff" stroke-width="1.500"/></svg><svg class="s12 x" viewBox="0 0 12 12"><path d="M2 2l8 8M10 2l-8 8" stroke="#b9c5cc" stroke-width="2"/></svg></a>
          </div>
          <div class="canvas">
            <svg class="scene" aria-hidden="true">
              <defs>
                <linearGradient id="side" x1="0" x2="1"><stop offset="0" stop-color="#6d7677"/><stop offset=".25" stop-color="#8b9799"/><stop offset=".55" stop-color="#afbdc3"/><stop offset=".75" stop-color="#939fa2"/><stop offset="1" stop-color="#7d8889"/></linearGradient>
                <linearGradient id="side2" x1="0" x2="1"><stop offset="0" stop-color="#a9b6bb"/><stop offset=".35" stop-color="#afbcc2"/><stop offset=".8" stop-color="#8b9698"/><stop offset="1" stop-color="#98a3a5"/></linearGradient>
                <linearGradient id="bore" x1="0" x2="1"><stop offset="0" stop-color="#8c9799"/><stop offset=".4" stop-color="#a9b7bc"/><stop offset=".7" stop-color="#8a9597"/><stop offset="1" stop-color="#616869"/></linearGradient>
                <linearGradient id="fillet" x1="0" x2="1" y1=".1" y2=".7"><stop offset="0" stop-color="#809295"/><stop offset=".25" stop-color="#effcfd"/><stop offset=".5" stop-color="#b9c8cc"/><stop offset="1" stop-color="#97a3a5"/></linearGradient>
              </defs>
              <g transform="translate(-267 -226)" stroke-linejoin="round">
                <g stroke="#2c2f30">
                  <path d="M538 850l43 129 221 37L782 955l-66-11-40-50z" fill="#697172"/>
                  <path d="M679 900Q690 934 716 944l70-44V880H680z" fill="url(#fillet)"/>
                  <path d="M716 944l66 11c30 3 60-3 91-13 40-13 64-22 80-42 13-16 12-34-16-41l-37-7-130 50z" fill="#97a3a5"/>
                  <path d="M782 955c30 3 60-3 91-13 40-13 64-22 80-42 7-9 10-17 8-25l21 62c2 15-14 26-32 36-40 22-100 45-148 43z" fill="url(#side)"/>
                  <path d="M810 922c0 10 22 11 45 4 30-9 53-22 53-35 0-10-24-11-48-4-28 6-52 23-50 35z" fill="url(#bore)"/>
                  <path d="M853 804c30-14 54-29 64-50l1-7 20 65c1 12-5 18-15 25-19 17-42 27-70 36z" fill="url(#side2)"/>
                  <path d="M853 723l34 6c18 3 31 8 31 20 0 22-30 40-65 55z" fill="#97a3a5"/>
                  <path d="M853 756c9 1 12 5 12 9 0 6-6 11-12 14z" fill="#616869"/>
                </g>
                <path d="M749 907l3 9 16-9M786 906l7 18" fill="none" stroke="#ddd"/>
                <path d="M787 920l7-2 1 15z" fill="#bbb"/>
                <text x="793" y="943" class="ax white">Z</text>
                <path d="M882 789l-27-78" stroke="#0a35d8" stroke-width="1.500"/><path d="M853 703l7 12-8 3z" fill="#0a35d8"/>
                <path d="M882 789l60-36" stroke="#2f9a34" stroke-width="1.500"/><path d="M958 742l-18 7 4 6z" fill="#2f9a34"/>
                <path d="M882 789l52 8" stroke="#c62a2c" stroke-width="1.500"/><path d="M947 800l-15-6-1 6z" fill="#c62a2c"/>
                <text x="854" y="695" class="ax blue">ZM</text>
                <text x="938" y="738" class="ax green">YM</text>
                <text x="928" y="813" class="ax red">XM</text>
                <path d="M914 876v15M906 884h15" stroke="#3a55ff" stroke-width="1.500"/>
                <!-- view triad -->
                <path d="M339 1203l31-19 26 4-30 20zM366 1208l12 37 31-18-13-39M339 1203l13 37 26 5" fill="none" stroke="#b0b0b0"/>
                <path d="M360 1224l-26 15" stroke="#35a33c" stroke-width="4"/><path d="M321 1248l10-13 7 8z" fill="#35a33c"/>
                <path d="M386 1217l22 3" stroke="#c1292c" stroke-width="4"/><path d="M419 1222l-13-7-2 10z" fill="#c1292c"/>
                <path d="M383 1242l8 24" stroke="#0a3bdc" stroke-width="4"/><path d="M396 1279l-10-13 9-4z" fill="#0a3bdc"/>
                <text x="422" y="1227" class="ax red">X</text>
                <text x="310" y="1256" class="ax green">Y</text>
                <path d="M396 1283.500h6" stroke="#7d8cf0"/>
              </g>
            </svg>
            <p class="mark"><span>UG</span>爱好者论坛<span> WWW.UGSNX.COM</span></p>

            <!-- cavity mill dialog -->
            <div class="dialog" role="dialog" aria-label="型腔銑">
              <div class="dlg-title"><svg viewBox="0 0 16 16"><use href="#gear" width="16" height="16"/></svg><span>型腔銑 - [CAVITY_MILL]</span><button class="help" aria-label="說明">?</button><button aria-label="關閉"><svg viewBox="0 0 12 12"><path d="M1 1l10 10M11 1L1 11" stroke="#fff" stroke-width="2"/></svg></button></div>
              <div class="search">
                <svg viewBox="0 0 24 24"><path d="M1 23v-6L5 5V1h5v22zM14 23V1h5v4l4 12v6zM10 6h4M10 14h4M1 18h9M14 18h9M5 5h5M14 5h5" fill="none" stroke="#333"/></svg>
                <label for="find">搜尋</label>
                <input type="text" id="find" value="主要 : 切削 : 切削方向 : 順銑">
              </div>
              <div class="cols">
                <ul class="pages">
                  <li><span>預測</span></li>
                  <li class="on"><span>主要</span></li>
                  <li><span>幾何體</span></li>
                  <li><span>刀軸和刀具補償</span></li>
                  <li><span>進給率和速度</span></li>
                  <li><span>切削層</span></li>
                  <li><span>策略</span></li>
                  <li class="parent"><span>非切削移動</span></li>
                  <li><span>公差和安全距離</span></li>
                  <li><span>碰撞檢查</span></li>
                  <li><span>刀具、程式和機床控制</span></li>
                  <li><span>選項</span></li>
                </ul>
                <div class="form">
                  <section class="sec">
                    <h3>主要</h3>
                    <div class="row tall"><label for="cutter">刀具</label>
                      <span class="combo w107"><select id="cutter"><option>NONE</option></select></span>
                      <button class="ib" aria-label="建立刀具"><svg viewBox="0 0 24 24"><use href="#holder" width="24" height="24"/><use href="#plus" x="12" y="12" width="12" height="12"/></svg></button>
                      <button class="ib" disabled aria-label="編輯刀具"><svg viewBox="0 0 24 24"><use href="#eye" x="0" y="0" width="22" height="16"/><path d="M9 21l7-8q0-4 4-5l-1 3 3 1 1-1q0 4-4 5l-7 8q-4 0-3-3z" fill="#fff" stroke="#333"/></svg></button>
                    </div>
                  </section>
                  <section class="sec">
                    <h3>刀軌設定</h3>
                    <div class="row pic"><label for="mode">切削模式</label>
                      <span class="combo w130"><svg viewBox="0 0 16 16"><path d="M0 5h3V1h10v4h3" fill="none" stroke="#444"/><path d="M4 16V4h8v12M6.500 16V6.500h3V16" fill="none" stroke="#12a4d4" stroke-width="1.300"/></svg><select id="mode"><option>跟隨零件</option></select></span>
                    </div>
                    <div class="row"><label for="step">步距</label><span class="combo w130"><select id="step"><option>% 刀具平直</option></select></span></div>
                    <div class="row low"><label for="pct">平面直徑百分比</label><input class="num" type="text" id="pct" value="70.00000"></div>
                    <div class="row"><label for="depth">公共每刀切削深度</label><span class="combo w130"><select id="depth"><option>恆定</option></select></span></div>
                    <div class="row"><label for="dist">最大距離</label><input class="num" type="text" id="dist" value=" 1.00000"><span class="combo w59"><select aria-label="單位"><option>mm</option></select></span></div>
                  </section>
                  <section class="sec">
                    <h3>切削</h3>
                    <div class="row"><label for="dir">切削方向</label>
                      <span class="combo w130"><select id="dir"><option>順銑</option><option>逆銑</option></select>
                        <ul class="drop"><li>順銑</li><li class="on">逆銑</li></ul>
                      </span>
                    </div>
                    <div class="row"><span class="lab">切削順序</span></div>
                  </section>
                  <section class="sec shut"><h3>冷卻液</h3></section>
                  <section class="sec shut"><h3>空間範圍</h3></section>
                </div>
              </div>
              <section class="sec actions">
                <h3>動作</h3>
                <div class="act-row">
                  <button class="ib" aria-label="產生"><svg viewBox="0 0 24 24"><use href="#zig" width="9" height="23"/><use href="#refresh" x="10" y="10" width="14" height="14"/></svg></button>
                  <button class="ib" disabled aria-label="重播"><svg viewBox="0 0 24 24"><use href="#zig" width="9" height="23"/><path d="M22 15a6 6 0 1 0 1 4M23 10v6h-6" fill="none" stroke="#333"/></svg></button>
                  <button class="ib" disabled aria-label="確認"><svg viewBox="0 0 24 24"><path d="M1 10l9-5 12 5v7l-9 6-12-6z" fill="#555" stroke="#333"/><use href="#otool" x="8" y="0" width="6" height="14"/><use href="#check" x="12" y="12" width="12" height="12"/></svg></button>
                  <button class="ib" disabled aria-label="列表"><svg viewBox="0 0 24 24"><use href="#report" width="24" height="24"/></svg></button>
                  <button class="ib gold" aria-label="選取"><svg viewBox="0 0 24 24"><use href="#zig" width="9" height="23"/><use href="#target" x="9" y="0" width="15" height="16"/></svg></button>
                </div>
              </section>
              <button class="fold" aria-label="收起"></button>
              <div class="dlg-foot"><button class="ok">確定</button><button class="cancel">取消</button></div>
            </div>
          </div>
        </main>
      </div>
    </div>
  </div>
</body>
</html>
```
FILE: styles.css
```
* {
  box-sizing: border-box;
}
body {
  margin: 0;
  font-family: "Noto Sans", "Noto Sans CJK TC", sans-serif;
  font-size: 12px;
  color: #1a1a1a;
  background: #fff;
}
button {
  margin: 0;
  padding: 0;
  border: 0;
  background: none;
  font: inherit;
  color: inherit;
}
button svg {
  display: block;
}
ul, h2, h3, p {
  margin: 0;
  padding: 0;
  list-style: none;
  font-weight: normal;
}
a {
  color: inherit;
  text-decoration: none;
}
svg {
  flex: none;
}
.defs {
  position: absolute;
}
.app {
  display: flex;
  flex-direction: column;
  height: 100vh;
  border-left: 1px solid #0b1a20;
  overflow: hidden;
}
.caret {
  display: block;
  width: 0;
  height: 0;
  border: 3px solid transparent;
  border-top-color: #111;
  border-bottom: 0;
  flex: none;
}
.caret.none {
  visibility: hidden;
}
.lit {
  background: #cde6eb;
}

/* title bar */
.titlebar {
  display: flex;
  align-items: center;
  height: 33px;
  color: #fff;
  background: linear-gradient(90deg, #006487, #04779f);
  flex: none;
}
.quick {
  display: flex;
  align-items: center;
  gap: 7px;
  padding-left: 8px;
  height: 33px;
}
.quick .caret {
  border-top-color: #fff;
}
.quick .caret.dim {
  border-top-color: #3587a3;
}
.logo {
  width: 31px;
  font-size: 22px;
  line-height: 33px;
}
.vline {
  width: 1px;
  height: 24px;
  margin-right: -1px;
  background: #02506d;
}
.q svg, .window-menu svg {
  width: 16px;
  height: 16px;
  fill: none;
  stroke: currentColor;
}
.q.dim {
  color: #2b80a0;
}
.window-menu {
  display: flex;
  align-items: center;
  gap: 5px;
  font-size: 11px;
}
.more-cmd {
  margin-left: -5px;
}
.caption {
  flex: 1;
  padding-left: 260px;
  text-align: center;
  font-size: 13px;
}
.tabs {
  display: flex;
  height: 27px;
  padding-left: 4px;
  color: #fff;
  font-size: 13px;
  background: linear-gradient(90deg, #006487, #04779f);
  flex: none;
}
.tabs a {
  height: 25px;
  padding: 0 16px;
  line-height: 24px;
  border-bottom: 2px solid transparent;
}
.tabs .file {
  padding: 0 26px 0 20px;
}
.tabs .on {
  color: #ffd24d;
  border-bottom-color: #ffc737;
}
.frame {
  flex: 1;
  display: flex;
  flex-direction: column;
  min-height: 0;
  border-left: 4px solid #006487;
}

/* ribbon */
.ribbon {
  display: flex;
  height: 90px;
  border-bottom: 1px solid #d6d6d6;
  font-size: 11px;
  line-height: 14px;
  flex: none;
}
.bar {
  width: 1px;
  margin: 5px 0 4px;
  background: #d6d6d6;
  flex: none;
}
.group {
  display: flex;
  flex-direction: column;
  padding-top: 3px;
}
.cmds {
  display: flex;
  gap: 1px;
  height: 71px;
  padding-left: 8px;
}
.g-predict .cmds, .g-ipw .cmds {
  padding-right: 6px;
}
.g-action .cmds {
  padding: 0 2px;
}
.g-show .cmds {
  gap: 0;
}
.cmd {
  display: flex;
  flex-direction: column;
  align-items: center;
  min-width: 41px;
  height: 70px;
  padding: 3px 4px 0;
  white-space: nowrap;
}
.cmd svg {
  width: 32px;
  height: 32px;
  margin-bottom: 4px;
  color: #333;
}
.cmd .caret {
  margin-top: 5px;
}
.cmd.more {
  width: 48px;
}
.g-action .cmd {
  width: 50px;
}
.cmd:disabled {
  color: #c2c2c2;
}
.cmd:disabled svg, .mini:disabled svg, .tiny:disabled svg, .ib:disabled svg, .boxed:disabled svg {
  filter: grayscale(1);
  opacity: .42;
}
.foot {
  display: flex;
  align-items: center;
  height: 14px;
  color: #006487;
}
.foot span {
  flex: 1;
  text-align: center;
}
.foot .caret {
  margin: 0 8px 4px 2px;
}
.stack {
  display: flex;
  flex-direction: column;
  gap: 11px;
  padding: 5px 11px 0 4px;
}
.mini svg {
  width: 24px;
  height: 24px;
}
.stack.ipw {
  gap: 6px;
  width: 48px;
  padding: 1px 0 0 4px;
}
.mini.lit {
  width: 31px;
  padding: 4px;
}
.mini.bolt {
  display: flex;
  align-items: center;
  gap: 8px;
  padding-left: 4px;
}
.stack.arrows {
  gap: 7px;
  padding: 3px 10px 0 18px;
}
.tiny svg {
  width: 16px;
  height: 16px;
}
.g-anim .cmds {
  gap: 0;
  padding: 5px 10px 0 11px;
}
.player {
  display: grid;
  grid-template-columns: repeat(4, 24px);
  grid-auto-rows: 24px;
  row-gap: 10px;
  align-items: center;
  justify-items: center;
}
.pl svg {
  width: 24px;
  height: 24px;
  fill: none;
  stroke: #333;
}
.speed {
  display: flex;
  flex-direction: column;
  align-items: center;
  gap: 3px;
  padding-top: 6px;
}
.speed input {
  appearance: none;
  width: 96px;
  height: 16px;
  margin: 0;
  background: linear-gradient(#a9a9a9, #a9a9a9) center / 100% 3px no-repeat;
}
.speed input::-webkit-slider-thumb {
  appearance: none;
  width: 8px;
  height: 16px;
  border: 1px solid #444;
  background: #005f87;
}

/* selection bar */
.selbar {
  display: flex;
  align-items: center;
  height: 29px;
  border-bottom: 2px solid #a9a9a9;
  font-size: 11px;
  flex: none;
}
.selbar .bar {
  height: 24px;
  margin: 0 12px 0 9px;
}
.menu-btn {
  display: flex;
  align-items: center;
  padding-left: 12px;
}
.menu-btn svg {
  width: 12px;
  height: 12px;
  margin-right: 6px;
}
.menu-btn .caret {
  margin-left: 5px;
}
.combo {
  position: relative;
  display: block;
  height: 23px;
  flex: none;
}
.combo::after {
  content: "";
  position: absolute;
  right: 5px;
  top: 10px;
  border: 4px solid transparent;
  border-top-color: #111;
  border-bottom: 0;
}
.combo select {
  appearance: none;
  width: 100%;
  height: 100%;
  padding: 0 4px;
  border: 1px solid #707070;
  border-radius: 0;
  background: #fff;
  color: #1a1a1a;
  font: inherit;
}
.combo.type {
  width: 148px;
}
.funnel {
  width: 17px;
  height: 17px;
  margin: 0 8px;
}
.combo.scope {
  width: 156px;
}
.sel {
  width: 24px;
  height: 22px;
  margin-right: 1px;
}
.sel svg {
  width: 22px;
  height: 20px;
}
.prompt {
  height: 21px;
  padding-left: 3px;
  font-size: 11px;
  line-height: 20px;
  flex: none;
}

/* resource bar */
.work {
  flex: 1;
  display: flex;
  min-height: 0;
}
.rail {
  display: flex;
  flex-direction: column;
  width: 32px;
  padding-top: 2px;
  border-right: 1px solid #a5a5a5;
  background: #dcdcdc;
  flex: none;
}
.rail button {
  height: 42px;
  padding-left: 6px;
}
.rail svg {
  width: 24px;
  height: 24px;
}
.rail .gear {
  height: 39px;
  padding: 2px 0 0 7px;
  display: flex;
  align-items: flex-start;
}
.rail .gear svg {
  width: 16px;
  height: 16px;
}
.rail .on {
  height: 43px;
  margin: 0 -1px 0 2px;
  padding-left: 4px;
  background: #fff;
}
.rail .far {
  height: 54px;
  padding-top: 12px;
}

/* operation navigator */
.navigator {
  display: flex;
  flex-direction: column;
  width: 228px;
  flex: none;
}
.nav-head {
  display: flex;
  justify-content: space-between;
  align-items: center;
  height: 32px;
  padding: 0 15px 2px 10px;
}
.nav-head h2 {
  font-size: 12px;
}
.max {
  width: 12px;
  height: 11px;
  border: 1px solid #111;
  border-top-width: 2px;
}
.nav-tools {
  display: flex;
  gap: 2px;
  padding-left: 10px;
}
.nav-tools button {
  width: 32px;
  height: 32px;
  padding: 4px;
}
.nav-tools svg {
  width: 24px;
  height: 24px;
  overflow: visible;
}
.nav-tools .boxed {
  padding: 3px;
  margin-left: 2px;
  border: 1px solid #707070;
}
.nav-tools .boxed:disabled {
  border-color: #bbb;
}
.tree {
  position: relative;
  flex: 1;
  display: flex;
  flex-direction: column;
  margin: 4px 14px 0 12px;
  padding: 1px 1px 0;
  border: 1px solid #d6d6d6;
  border-bottom: 0;
}
.tree-head {
  height: 19px;
  padding-left: 7px;
  line-height: 19px;
  background: #efefef;
  border-bottom: 1px solid #dcdcdc;
}
.tree ul, .pages {
  flex: 1;
  background: repeating-linear-gradient(#fff 0 19px, #e8e8e8 19px 20px, #fafafa 20px 39px, #e8e8e8 39px 40px);
}
.tree li {
  display: flex;
  align-items: center;
  gap: 2px;
  height: 20px;
  padding-bottom: 2px;
}
.s14 {
  width: 14px;
  height: 14px;
}
.s16 {
  width: 16px;
  height: 16px;
  margin-right: 1px;
}
.s12 {
  width: 12px;
  height: 12px;
}
.l0 { padding-left: 19px; }
.l1 { padding-left: 38px; }
.l2 { padding-left: 45px; }
.l3 { padding-left: 64px; }
.bang {
  width: 2px;
  height: 16px;
  margin-right: 5px;
  background: linear-gradient(#ffae42 0 12px, transparent 12px 14px, #ffae42 14px);
}
.violet {
  color: #7b68ee;
}
.sage {
  color: #8fae9f;
}
.lines {
  position: absolute;
  left: 0;
  top: 20px;
  fill: none;
  stroke: #999;
  stroke-dasharray: 1 1;
}
.boxes {
  fill: #fff;
  stroke: #bbb;
  stroke-dasharray: none;
}
.boxes path {
  stroke: #111;
}

/* graphics window */
.view {
  flex: 1;
  display: flex;
  flex-direction: column;
  border-left: 2px solid #b4b4b4;
}
.docs {
  display: flex;
  height: 26px;
  border-bottom: 2px solid #006487;
  flex: none;
}
.doc {
  display: flex;
  align-items: center;
  gap: 5px;
  padding: 0 21px 0 6px;
}
.doc svg:first-child {
  width: 16px;
  height: 16px;
}
.doc.on {
  gap: 4px;
  color: #fff;
  background: #005f87;
  padding: 0 6px;
}
.canvas {
  position: relative;
  flex: 1;
  overflow: hidden;
}
.scene {
  position: absolute;
  width: 100%;
  height: 100%;
}
.ax {
  font-size: 12px;
}
.white { fill: #ddd; }
.blue { fill: #4458e8; }
.green { fill: #3b9a40; }
.red { fill: #d03a3c; }
.mark {
  position: absolute;
  right: 5px;
  bottom: 1px;
  font: 300 15px/24px "Noto Sans CJK SC", sans-serif;
  color: #555;
  white-space: pre;
}
.mark span {
  font: 14px "Liberation Mono", monospace;
}

/* dialog */
.dialog {
  position: absolute;
  left: 0;
  top: 32px;
  width: 587px;
  border: solid #d0d0d0;
  border-width: 0 1px 1px 0;
  background: #efefef;
}
.dlg-title {
  display: flex;
  align-items: center;
  gap: 14px;
  height: 24px;
  padding: 0 9px 2px 6px;
  margin-right: -1px;
  font-size: 14px;
  color: #fff;
  background: #005f87;
}
.dlg-title > svg {
  width: 16px;
  height: 16px;
  margin-right: -6px;
}
.dlg-title span {
  flex: 1;
}
.dlg-title button svg {
  width: 12px;
  height: 12px;
}
.dlg-title .help {
  font-weight: bold;
  font-size: 16px;
}
.search {
  display: flex;
  align-items: center;
  padding: 8px 9px 9px 10px;
}
.search svg {
  width: 24px;
  height: 22px;
  margin-right: 2px;
}
.search input {
  flex: 1;
  height: 22px;
  margin-left: 6px;
  padding: 0 5px 2px;
  border: 1px solid #707070;
  font: inherit;
}
.cols {
  display: flex;
  gap: 10px;
  height: 450px;
  padding: 0 10px 0 12px;
}
.pages {
  width: 167px;
  flex: none;
  padding: 1px;
  border: 1px solid #d6d6d6;
  background-origin: content-box;
}
.pages li {
  position: relative;
  height: 20px;
  padding: 0 0 1px 19px;
}
.pages span {
  display: block;
  height: 19px;
  padding-left: 3px;
  line-height: 20px;
}
.pages .on span {
  background: #cde6eb;
}
/* dotted tree connector */
.pages li::before {
  content: "";
  position: absolute;
  left: 9px;
  top: -10px;
  width: 9px;
  height: 20px;
  border: dotted #999;
  border-width: 0 0 1px 1px;
}
.pages li:first-child::before {
  top: 9px;
  height: 1px;
}
.pages .parent::after {
  content: "+";
  position: absolute;
  left: 5px;
  top: 5px;
  width: 9px;
  height: 9px;
  border: 1px solid #bbb;
  background: #fff;
  font-size: 10px;
  line-height: 7px;
  text-align: center;
}
.form {
  flex: 1;
  padding-right: 3px;
  border: 1px solid #d6d6d6;
}
.sec {
  margin-bottom: 3px;
  padding: 2px 9px 8px 9px;
  border-bottom: 1px solid #c4c4c4;
  background: #fff;
}
.sec h3 {
  position: relative;
  height: 22px;
  margin: 0 0 6px -2px;
  padding-left: 17px;
  font-size: 14px;
  line-height: 20px;
  color: #006487;
}
.sec h3::before {
  content: "";
  position: absolute;
  left: 0;
  top: 9px;
  border: 5px solid transparent;
  border-top-color: #006487;
  border-bottom: 0;
}
.sec.shut {
  padding: 1px 9px 0;
}
.sec.shut h3 {
  margin-bottom: 0;
}
.sec.shut h3::before {
  left: 3px;
  top: 6px;
  border: 5px solid transparent;
  border-left-color: #006487;
  border-right: 0;
}
.row {
  display: flex;
  gap: 2px;
  height: 23px;
  margin-bottom: 2px;
  line-height: 24px;
}
.row:last-child {
  margin-bottom: 0;
}
.row label, .lab {
  flex: 1;
}
.row.tall {
  height: 32px;
}
.row.pic, .row.pic .combo {
  height: 26px;
}
.row.low {
  height: 21px;
  line-height: 22px;
}
.w107 { width: 107px; }
.w130 { width: 130px; }
.w59 { width: 59px; }
.pic .combo svg {
  position: absolute;
  left: 5px;
  top: 5px;
  width: 16px;
  height: 16px;
}
.pic .combo select {
  padding-left: 25px;
}
.num {
  width: 74px;
  height: 21px;
  padding: 0 0 0 10px;
  border: 1px solid #707070;
  font: 14px "Liberation Mono", monospace;
}
.ib {
  width: 32px;
  height: 32px;
  padding: 3px;
  border: 1px solid #707070;
  flex: none;
}
.ib:disabled {
  border-color: #bbb;
}
.ib svg {
  width: 24px;
  height: 24px;
  color: #333;
}
.ib.gold {
  border-color: #ffe07a;
  background: #ffe07a;
}
.drop {
  position: absolute;
  z-index: 2;
  left: 0;
  top: 23px;
  width: 100%;
  border: 1px solid #707070;
  background: #fff;
}
.drop li {
  height: 17px;
  padding-left: 2px;
  line-height: 18px;
}
.drop .on {
  background: #daeaee;
}
.actions {
  margin: 2px 9px 0 10px;
}
.act-row {
  display: grid;
  grid-template-columns: 1fr repeat(4, 32px) 1fr;
  gap: 2px;
}
.act-row .ib:first-child {
  grid-column: 2;
}
.act-row .gold {
  justify-self: end;
}
.fold {
  display: block;
  width: 574px;
  height: 21px;
  margin: 0 auto;
  padding-top: 4px;
  border-bottom: 1px solid #d0d0d0;
}
.fold::before {
  content: "";
  display: block;
  width: 0;
  margin: 0 auto;
  border: 5px solid transparent;
  border-bottom-color: #111;
  border-top: 0;
}
.dlg-foot {
  display: flex;
  justify-content: flex-end;
  gap: 5px;
  padding: 8px 15px 10px;
}
.dlg-foot button {
  width: 54px;
  height: 23px;
  border: 1px solid #005f87;
}
.ok {
  color: #fff;
  background: #005f87;
}
.cancel {
  color: #005f87;
}
```
